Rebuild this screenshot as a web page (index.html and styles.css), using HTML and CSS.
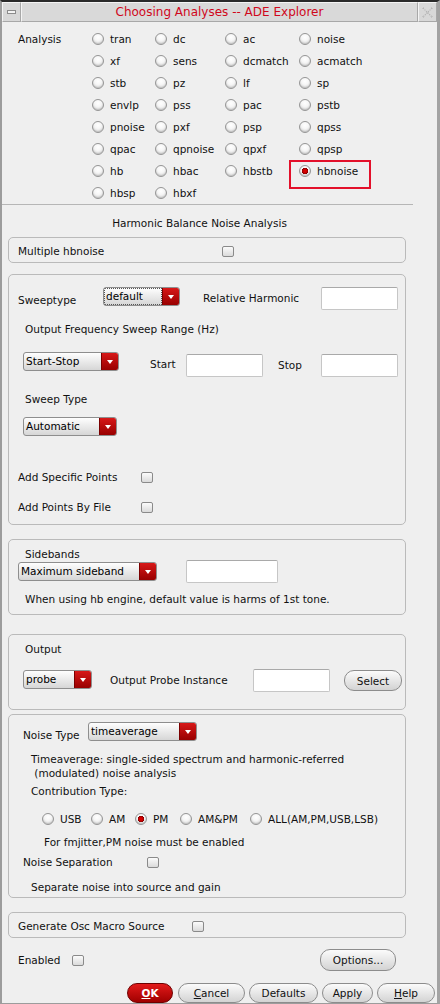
FILE: index.html
```html
<!DOCTYPE html>
<html>
<head>
<meta charset="utf-8">
<title>Choosing Analyses -- ADE Explorer</title>
<link rel="stylesheet" href="styles.css">
</head>
<body>
<div class="window">
  <div class="titlebar">
    <div class="tb-btn"><span class="min-icon"></span></div>
    <div class="tb-title">Choosing Analyses -- ADE Explorer</div>
    <div class="tb-btn">
      <svg width="13" height="13" viewBox="0 0 13 13"><path d="M2 2 L11 11 M11 2 L2 11" stroke="#b4b4b4" stroke-width="1.2" stroke-dasharray="1.2 1" fill="none"/><path d="M1 3 L3 1 M10 1 L12 3 M1 10 L3 12 M10 12 L12 10" stroke="#c4c4c4" stroke-width="1" fill="none"/></svg>
    </div>
  </div>

  <div class="analysis">
    <div class="alabel">Analysis</div>
    <div class="agrid">
      <label class="ritem"><span class="radio"></span>tran</label>
      <label class="ritem"><span class="radio"></span>dc</label>
      <label class="ritem"><span class="radio"></span>ac</label>
      <label class="ritem"><span class="radio"></span>noise</label>
      <label class="ritem"><span class="radio"></span>xf</label>
      <label class="ritem"><span class="radio"></span>sens</label>
      <label class="ritem"><span class="radio"></span>dcmatch</label>
      <label class="ritem"><span class="radio"></span>acmatch</label>
      <label class="ritem"><span class="radio"></span>stb</label>
      <label class="ritem"><span class="radio"></span>pz</label>
      <label class="ritem"><span class="radio"></span>lf</label>
      <label class="ritem"><span class="radio"></span>sp</label>
      <label class="ritem"><span class="radio"></span>envlp</label>
      <label class="ritem"><span class="radio"></span>pss</label>
      <label class="ritem"><span class="radio"></span>pac</label>
      <label class="ritem"><span class="radio"></span>pstb</label>
      <label class="ritem"><span class="radio"></span>pnoise</label>
      <label class="ritem"><span class="radio"></span>pxf</label>
      <label class="ritem"><span class="radio"></span>psp</label>
      <label class="ritem"><span class="radio"></span>qpss</label>
      <label class="ritem"><span class="radio"></span>qpac</label>
      <label class="ritem"><span class="radio"></span>qpnoise</label>
      <label class="ritem"><span class="radio"></span>qpxf</label>
      <label class="ritem"><span class="radio"></span>qpsp</label>
      <label class="ritem"><span class="radio"></span>hb</label>
      <label class="ritem"><span class="radio"></span>hbac</label>
      <label class="ritem"><span class="radio"></span>hbstb</label>
      <label class="ritem hl"><span class="radio on"></span>hbnoise</label>
      <label class="ritem"><span class="radio"></span>hbsp</label>
      <label class="ritem"><span class="radio"></span>hbxf</label>
    </div>
  </div>

  <div class="sep"></div>
  <div class="heading">Harmonic Balance Noise Analysis</div>

  <div class="form">
    <div class="group g-multi">
      <span class="mlabel">Multiple hbnoise</span><span class="check"></span>
    </div>

    <div class="group g-sweep">
      <div class="row rA">
        <span class="l-sweeptype">Sweeptype</span>
        <div class="dd dd-default"><span class="dd-text focus">default</span><span class="dd-arrow"></span></div>
        <span class="l-relh">Relative Harmonic</span>
        <span class="inp inp-right"></span>
      </div>
      <div class="row rB"><span class="l-osr">Output Frequency Sweep Range (Hz)</span></div>
      <div class="row rC">
        <div class="dd dd-ss"><span class="dd-text">Start-Stop</span><span class="dd-arrow"></span></div>
        <span class="l-start">Start</span>
        <span class="inp inp-c"></span>
        <span class="l-stop">Stop</span>
        <span class="inp inp-c"></span>
      </div>
      <div class="row rD"><span class="l-osr">Sweep Type</span></div>
      <div class="row rE">
        <div class="dd dd-auto"><span class="dd-text">Automatic</span><span class="dd-arrow"></span></div>
      </div>
      <div class="row rF"><span class="l-add">Add Specific Points</span><span class="check"></span></div>
      <div class="row rG"><span class="l-add">Add Points By File</span><span class="check"></span></div>
    </div>

    <div class="group g-side">
      <div class="l-sidebands">Sidebands</div>
      <div class="row rS">
        <div class="dd dd-max"><span class="dd-text">Maximum sideband</span><span class="dd-arrow"></span></div>
        <span class="inp inp-side"></span>
      </div>
      <div class="note-side">When using hb engine, default value is harms of 1st tone.</div>
    </div>

    <div class="group g-out">
      <div class="l-output">Output</div>
      <div class="row rO">
        <div class="dd dd-probe"><span class="dd-text">probe</span><span class="dd-arrow"></span></div>
        <span class="l-probe">Output Probe Instance</span>
        <span class="inp inp-probe"></span>
        <span class="btn btn-select">Select</span>
      </div>
    </div>

    <div class="group g-noise">
      <div class="row rN">
        <span class="l-ntype">Noise Type</span>
        <div class="dd dd-time"><span class="dd-text">timeaverage</span><span class="dd-arrow"></span></div>
      </div>
      <div class="n-desc">Timeaverage: single-sided spectrum and harmonic-referred<br>&nbsp;(modulated) noise analysis</div>
      <div class="n-contrib">Contribution Type:</div>
      <div class="row rR">
        <label class="ritem c-usb"><span class="radio"></span>USB</label>
        <label class="ritem c-am"><span class="radio"></span>AM</label>
        <label class="ritem c-pm"><span class="radio on"></span>PM</label>
        <label class="ritem c-ampm"><span class="radio"></span>AM&amp;PM</label>
        <label class="ritem"><span class="radio"></span>ALL(AM,PM,USB,LSB)</label>
      </div>
      <div class="n-fm">For fmjitter,PM noise must be enabled</div>
      <div class="row rNS"><span class="l-nsep">Noise Separation</span><span class="check"></span></div>
      <div class="n-sep">Separate noise into source and gain</div>
    </div>

    <div class="group g-gen">
      <span class="l-gen">Generate Osc Macro Source</span><span class="check"></span>
    </div>
  </div>

  <div class="row r-enabled">
    <span class="l-enabled">Enabled</span><span class="check"></span>
    <span class="btn btn-options">Options...</span>
  </div>
  <div class="row r-buttons">
    <span class="btn btn-ok"><u>O</u>K</span>
    <span class="btn btn-cancel"><u>C</u>ancel</span>
    <span class="btn btn-defaults">Defaults</span>
    <span class="btn btn-apply">Apply</span>
    <span class="btn btn-help"><u>H</u>elp</span>
  </div>
</div>
</body>
</html>
```

FILE: styles.css
```css
* { box-sizing: border-box; }
html, body { margin: 0; padding: 0; background: #efefef; }
body {
  font-family: "DejaVu Sans", sans-serif;
  font-size: 10.5px;
  line-height: 14px;
  color: #111;
}

.window {
  width: 440px;
  height: 1004px;
  background: #efefef;
  border-top: 2px solid #2a2a2a;
  border-left: 2px solid #9c9c9c;
  border-right: 3px solid #a3a3a3;
  border-bottom: 1px solid #9c9c9c;
  overflow: hidden;
}

/* title bar */
.titlebar { display: flex; height: 20px; background: #dadada; }
.tb-btn {
  width: 19px; height: 20px; flex: none;
  border: 1px solid #a8a8a8;
  border-top-color: #f4f4f4; border-left-color: #f4f4f4;
  background: #d8d8d8;
  display: flex; align-items: center; justify-content: center;
}
.min-icon { width: 9px; height: 4px; border: 1px solid #8c8c8c; background: #f4f4f4; }
.tb-title {
  flex: 1; height: 20px;
  border: 1px solid #a8a8a8;
  border-top-color: #f4f4f4; border-left-color: #f4f4f4;
  background: #d9d9d9;
  text-align: center;
  color: #d0071b;
  font-size: 12px;
  line-height: 18px;
}

/* analysis */
.analysis { display: flex; margin-top: 6px; padding-left: 16px; }
.alabel { width: 74px; height: 22px; line-height: 22px; }
.agrid { display: grid; grid-template-columns: 63px 70px 74px 74px; grid-auto-rows: 22px; }
.ritem { display: flex; align-items: center; gap: 6px; position: relative; white-space: nowrap; }
.radio {
  width: 12px; height: 12px; flex: none;
  border-radius: 50%;
  border: 1px solid #959595;
  background: radial-gradient(circle at 50% 32%, #ffffff 0%, #f6f6f6 40%, #cdcdcd 100%);
  box-shadow: inset 0 -1px 1px rgba(0,0,0,0.12);
}
.radio.on {
  background:
    radial-gradient(circle at 50% 50%, #e40000 0, #c00000 2.2px, #7a0000 3px, transparent 3.4px),
    radial-gradient(circle at 50% 32%, #ffffff 0%, #f6f6f6 40%, #cdcdcd 100%);
}
.hl::after {
  content: "";
  position: absolute;
  left: -10px; top: 0;
  width: 78px; height: 25px;
  border: 2px solid #e3102a;
}

.sep { width: 411px; height: 1px; background: #b6b6b6; }
.heading { margin-top: 11px; width: 395px; text-align: center; }

/* form */
.form { padding-left: 6px; }
.group { width: 398px; border: 1px solid #bababa; border-radius: 5px; }
.row { display: flex; align-items: flex-start; }

.check {
  width: 12px; height: 11px; flex: none;
  border: 1px solid #8a8a8a;
  border-radius: 2px;
  background: linear-gradient(#fbfbfb, #dadada);
}

.inp {
  display: block; flex: none;
  width: 77px; height: 23px;
  background: #fff;
  border: 1px solid #c6c6c6;
  border-top-color: #a9a9a9;
  border-radius: 2px;
}

.dd {
  display: flex; flex: none;
  height: 19px;
  border: 1px solid #8e8e8e;
  border-radius: 3px;
  background: linear-gradient(#fefefe, #d6d6d6);
  overflow: hidden;
}
.dd-text { flex: 1; padding-left: 2px; line-height: 16px; color: #000; white-space: nowrap; }
.dd-text.focus { outline: 1px dotted #555; outline-offset: -1px; }
.dd-arrow {
  width: 17px; flex: none;
  background: linear-gradient(#d71818, #980000);
  border-left: 1px solid #7a0000;
  display: flex; align-items: center; justify-content: center;
}
.dd-arrow::after {
  content: "";
  border-top: 4px solid #fff;
  border-left: 3.5px solid transparent;
  border-right: 3.5px solid transparent;
}

.btn {
  display: flex; align-items: center; justify-content: center; flex: none;
  border: 1px solid #8c8c8c;
  border-radius: 10px;
  background: linear-gradient(#fbfbfb, #d3d3d3);
  color: #111;
  white-space: nowrap;
}
.btn u { text-decoration: underline; }

/* multiple */
.g-multi { margin-top: 7px; height: 26px; display: flex; align-items: center; padding: 2px 0 0 9px; }
.mlabel { width: 204px; }

/* sweep */
.g-sweep { margin-top: 11px; padding: 12px 7px 10px 0; }
.l-sweeptype { margin-left: 9px; width: 85px; margin-top: 6px; }
.dd-default { width: 77px; }
.l-relh { margin-left: 23px; margin-top: 4px; }
.inp-right { margin-left: auto; }
.rB { margin-top: 12px; }
.l-osr { margin-left: 16px; }
.rC { margin-top: 16px; height: 25px; }
.dd-ss { margin-left: 14px; width: 96px; }
.l-start { margin-left: 31px; width: 36px; margin-top: 5px; }
.inp-c { margin-top: 2px; }
.l-stop { margin-left: 15px; width: 43px; margin-top: 6px; }
.rD { margin-top: 15px; }
.rE { margin-top: 11px; }
.dd-auto { margin-left: 14px; width: 94px; }
.rF { margin-top: 34px; height: 14px; align-items: center; }
.rG { margin-top: 16px; height: 14px; align-items: center; }
.l-add { margin-left: 9px; width: 123px; }

/* sidebands */
.g-side { margin-top: 14px; padding: 8px 0 8px 0; }
.l-sidebands { margin-left: 16px; line-height: 12px; }
.rS { height: 23px; }
.dd-max { margin-left: 9px; width: 139px; margin-top: 2px; }
.inp-side { margin-left: 29px; width: 92px; }
.note-side { margin-left: 16px; margin-top: 9px; }

/* output */
.g-out { margin-top: 19px; padding: 7px 0 17px 0; }
.l-output { margin-left: 16px; }
.rO { margin-top: 13px; height: 23px; }
.dd-probe { margin-left: 14px; width: 69px; margin-top: 1px; }
.l-probe { margin-left: 18px; width: 143px; margin-top: 4px; }
.inp-probe { width: 77px; }
.btn-select { margin-left: 14px; width: 58px; height: 21px; margin-top: 1px; }

/* noise */
.g-noise { margin-top: 4px; padding: 7px 0 3px 0; }
.l-ntype { margin-left: 14px; width: 65px; margin-top: 6px; }
.dd-time { width: 109px; }
.n-desc { margin-left: 22px; margin-top: 10px; }
.n-contrib { margin-left: 22px; margin-top: 4px; }
.rR { margin-top: 14px; height: 14px; align-items: center; padding-left: 33px; }
.c-usb { width: 49px; }
.c-am { width: 44px; }
.c-pm { width: 45px; }
.c-ampm { width: 70px; }
.n-fm { margin-left: 35px; margin-top: 9px; }
.rNS { margin-top: 6px; height: 14px; align-items: center; }
.l-nsep { margin-left: 14px; width: 124px; }
.n-sep { margin-left: 22px; margin-top: 11px; }

/* generate */
.g-gen { margin-top: 14px; height: 26px; display: flex; align-items: center; padding: 2px 0 0 9px; }
.l-gen { width: 174px; }

/* footer */
.r-enabled { margin-top: 11px; height: 22px; align-items: center; }
.l-enabled { margin-left: 16px; width: 54px; }
.btn-options { margin-left: auto; margin-right: 41px; width: 76px; height: 22px; }
.r-buttons { margin-top: 12px; height: 20px; justify-content: flex-end; gap: 4px; padding-right: 2px; }
.r-buttons .btn { height: 20px; }
.btn-ok {
  width: 46px; margin-right: 1px;
  background: linear-gradient(#e21a1a, #a00000);
  border-color: #6e0000;
  color: #fff; font-weight: bold;
}
.btn-cancel { width: 67px; }
.btn-defaults { width: 69px; }
.btn-apply { width: 51px; }
.btn-help { width: 58px; }
```
